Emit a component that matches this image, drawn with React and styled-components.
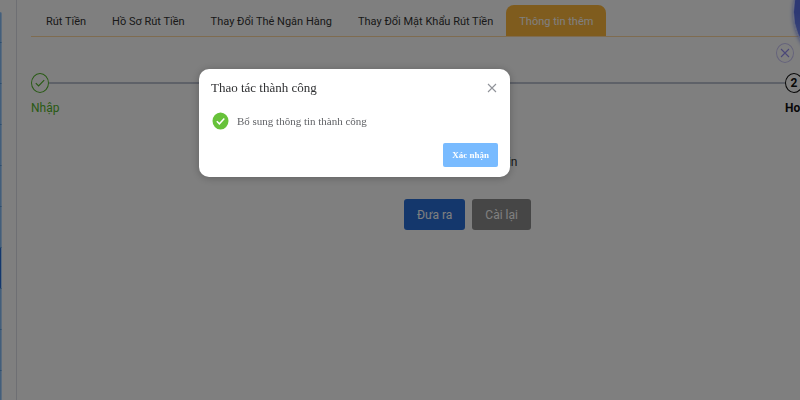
import React from 'react'
import styled, { createGlobalStyle } from 'styled-components'

const green = '#52b52a'
const blue = '#286fd8'
const gold = '#ffb83d'

const GlobalStyle = createGlobalStyle`
  * {
    box-sizing: border-box;
  }

  body {
    margin: 0;
    overflow: hidden;
    background: #fff;
    color: #333;
    font-family: Roboto, 'Liberation Sans', Arial, sans-serif;
    font-size: 12px;
  }

  button {
    font: inherit;
    cursor: pointer;
  }
`

const Page = styled.div`
  display: flex;
  min-height: 100vh;
  overflow: hidden;
`

const Sidebar = styled.nav`
  flex: none;
  width: 2px;
  margin-right: 14px;
  padding-top: 12px;
`

const SidebarItem = styled.a`
  display: block;
  height: ${({ $short }) => ($short ? 31 : 41)}px;
  border-bottom: 1px solid #5a9ad8;
  border-right: 1px solid #b4d8ff;
  border-top-right-radius: ${({ $short }) => ($short ? 2 : 0)}px;
  background: ${({ $active }) => ($active ? blue : '#86bdf5')};
`

/* the panel runs past the right edge of the window */
const Panel = styled.main`
  flex: 1;
  margin-right: -104px;
  padding: 5px 0 0 14px;
  border-left: 1px solid #dcdfe6;
`

const Tabs = styled.div`
  display: flex;
  padding-left: 2px;
  border-bottom: 1px solid #ffd9a0;
`

const Tab = styled.button`
  height: 31px;
  padding: 1px 13px 0;
  border: none;
  border-radius: 8px 8px 0 0;
  background: ${({ $active }) => ($active ? gold : 'transparent')};
  color: ${({ $active }) => ($active ? '#fff' : '#333')};
  font-size: 11px;
  white-space: nowrap;
`

const Steps = styled.ol`
  display: flex;
  margin: 0;
  padding: 36px 0 0;
  list-style: none;
`

const Step = styled.li`
  flex: ${({ $last }) => ($last ? '0 0 119px' : 1)};
  color: ${({ $done }) => ($done ? green : '#111')};
  font-weight: ${({ $done }) => ($done ? 400 : 700)};
`

const StepHead = styled.div`
  display: flex;
  align-items: center;
`

const StepIcon = styled.span`
  display: flex;
  flex: none;
  align-items: center;
  justify-content: center;
  width: 18px;
  height: 20px;
  border: 1px solid currentColor;
  border-radius: 50%;
`

const StepLine = styled.span`
  flex: 1;
  height: 2px;
  background: #bcc2d0;
`

const StepTitle = styled.div`
  margin-top: 6px;
  line-height: 18px;
`

const Hint = styled.p`
  margin: 36px 0 0;
  line-height: 18px;
  text-align: center;
`

const Actions = styled.div`
  display: flex;
  justify-content: center;
  gap: 7px;
  margin-top: 28px;
`

const ActionButton = styled.button`
  height: 31px;
  padding: 0 13px;
  border: none;
  border-radius: 3px;
  background: ${({ $primary }) => ($primary ? blue : '#8c8c8c')};
  color: #fff;
`

const Bubble = styled.div`
  position: absolute;
  top: -46px;
  right: -109px;
  width: 116px;
  height: 116px;
  border: 1px solid #b9c5ff;
  border-radius: 50%;
  background: linear-gradient(#5a70e8 50%, #8fa8ff);
  box-shadow: 0 1px 4px #7d92f0;
`

const BubbleClip = styled.aside`
  position: absolute;
  top: 0;
  right: 0;
  width: 32px;
  height: 72px;
  overflow: hidden;
`

const BubbleClose = styled.button`
  position: absolute;
  top: 43px;
  left: 8px;
  display: flex;
  align-items: center;
  justify-content: center;
  width: 18px;
  height: 20px;
  padding: 0;
  border: 1px solid #cbc7f6;
  border-radius: 50%;
  background: transparent;
  color: #948ef0;
`

const Overlay = styled.div`
  position: fixed;
  inset: 0;
  padding: 69px 0 0 199px;
  background: rgba(0, 0, 0, 0.5);
`

const Dialog = styled.section`
  width: 311px;
  max-width: 100%;
  padding: 10px 12px;
  border-radius: 10px;
  background: #fff;
  box-shadow: 0 1px 8px rgba(0, 0, 0, 0.25);
  color: #606266;
  font-family: 'Liberation Serif', 'Times New Roman', serif;
  font-size: 11px;
`

const DialogHeader = styled.header`
  display: flex;
  align-items: center;
  justify-content: space-between;
`

const DialogTitle = styled.h2`
  margin: 0;
  color: #303133;
  font-size: 13px;
  font-weight: 400;
  line-height: 18px;
`

const CloseButton = styled.button`
  display: flex;
  padding: 0 1px;
  border: none;
  background: transparent;
  color: #909399;
`

const DialogBody = styled.div`
  display: flex;
  align-items: center;
  gap: 8px;
  padding: 15px 0 13px 1px;
`

const DialogFooter = styled.footer`
  display: flex;
  justify-content: flex-end;
`

const ConfirmButton = styled.button`
  height: 24px;
  padding: 0 9px;
  border: none;
  border-radius: 2px;
  background: #79bbff;
  color: #fff;
  font-size: 9px;
  font-weight: 700;
`

const Cross = ({ size }) => (
  <svg width={size} height={size} viewBox="0 0 10 10" fill="none" stroke="currentColor" strokeWidth="1.1">
    <path d="M1 1L9 9M9 1L1 9" />
  </svg>
)

const tabs = [
  'Rút Tiền',
  'Hồ Sơ Rút Tiền',
  'Thay Đổi Thẻ Ngân Hàng',
  'Thay Đổi Mật Khẩu Rút Tiền',
  'Thông tin thêm',
]

const links = ['home', 'profile', 'deposit', 'transfer', 'history', 'bonus', 'withdraw', 'messages', 'support', 'settings']

const App = () => (
  <>
    <GlobalStyle />
    <Page>
      <Sidebar>
        {links.map((link, i) => (
          <SidebarItem key={link} href={`#${link}`} aria-label={link} $short={i === 0} $active={link === 'withdraw'} />
        ))}
      </Sidebar>
      <Panel>
        <Tabs role="tablist">
          {tabs.map((tab, i) => (
            <Tab key={tab} role="tab" aria-selected={i === 4} $active={i === 4}>{tab}</Tab>
          ))}
        </Tabs>
        <Steps>
          <Step $done>
            <StepHead>
              <StepIcon>
                <svg width="10" height="10" viewBox="0 0 10 10" fill="none" stroke="currentColor" strokeWidth="1.2">
                  <path d="M0.8 5.2L3.6 8L9.2 2.2" />
                </svg>
              </StepIcon>
              <StepLine />
            </StepHead>
            <StepTitle>Nhập</StepTitle>
          </Step>
          <Step $last>
            <StepHead>
              <StepIcon>2</StepIcon>
            </StepHead>
            <StepTitle>Hoàn thành</StepTitle>
          </Step>
        </Steps>
        <Hint>Xác nhận thông tin</Hint>
        <Actions>
          <ActionButton $primary>Đưa ra</ActionButton>
          <ActionButton>Cài lại</ActionButton>
        </Actions>
      </Panel>
    </Page>
    <BubbleClip>
      <Bubble />
      <BubbleClose aria-label="Close bubble">
        <Cross size={10} />
      </BubbleClose>
    </BubbleClip>
    <Overlay>
      <Dialog role="dialog" aria-labelledby="dialog-title">
        <DialogHeader>
          <DialogTitle id="dialog-title">Thao tác thành công</DialogTitle>
          <CloseButton aria-label="Close">
            <Cross size={10} />
          </CloseButton>
        </DialogHeader>
        <DialogBody>
          <svg width="17" height="18" viewBox="0 0 17 18">
            <ellipse cx="8.5" cy="9" rx="8" ry="8.6" fill="#67c23a" />
            <path d="M4.8 9.2L7.4 11.8L12.3 6.6" fill="none" stroke="#fff" strokeWidth="1.5" />
          </svg>
          <span>Bổ sung thông tin thành công</span>
        </DialogBody>
        <DialogFooter>
          <ConfirmButton>Xác nhận</ConfirmButton>
        </DialogFooter>
      </Dialog>
    </Overlay>
  </>
)

export default App
